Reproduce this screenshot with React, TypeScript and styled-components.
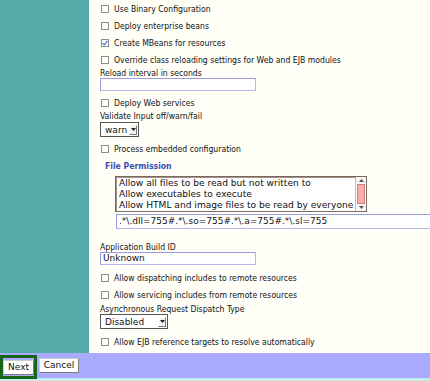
import React from "react";
import styled, { createGlobalStyle } from "styled-components";

const Global = createGlobalStyle`
  html, body { margin: 0; padding: 0; background: #fffff8; }
  body { font-family: "DejaVu Sans Condensed", "DejaVu Sans", sans-serif; }
`;

const Page = styled.div`
  width: 430px;
  height: 381px;
  overflow: hidden;
  display: flex;
  flex-direction: column;
`;

const Main = styled.div`
  display: grid;
  grid-template-columns: 89px 1fr;
  height: 353px;
`;

const Sidebar = styled.div`
  background: #54aaa6;
`;

const Content = styled.div`
  background: #fffff8;
  padding-left: 11px;
  overflow: hidden;
  display: flex;
  flex-direction: column;
  font-family: "DejaVu Sans Condensed", "DejaVu Sans", sans-serif;
  font-size: 8.6px;
  color: #111;
`;

const CheckRow = styled.label<{ $mt?: number }>`
  display: flex;
  align-items: center;
  gap: 5px;
  height: 17px;
  margin-top: ${(p) => p.$mt ?? 0}px;
  padding-left: 1px;
  white-space: nowrap;
`;

const Box = styled.span`
  width: 8px;
  height: 8px;
  box-sizing: border-box;
  border: 1px solid #8e8e8e;
  background: #ffffff;
  display: inline-flex;
  align-items: center;
  justify-content: center;
  flex: none;
`;

const Label = styled.div<{ $mt?: number }>`
  line-height: 10px;
  height: 10px;
  margin-top: ${(p) => p.$mt ?? 0}px;
  white-space: nowrap;
`;

const TextInput = styled.div<{ $w: number; $ml?: number; $mt?: number; $h?: number }>`
  width: ${(p) => p.$w}px;
  height: ${(p) => p.$h ?? 13}px;
  margin-left: ${(p) => p.$ml ?? 0}px;
  margin-top: ${(p) => p.$mt ?? 0}px;
  box-sizing: border-box;
  border: 1px solid #b4b4ee;
  border-top-color: #9a9ae0;
  border-left-color: #9a9ae0;
  background: #ffffff;
  font-family: "DejaVu Sans", sans-serif;
  font-size: 9px;
  line-height: ${(p) => (p.$h ?? 13) - 2}px;
  padding-left: 2px;
  white-space: nowrap;
  flex: none;
  color: #111;
`;

const Select = styled.div<{ $w: number; $mt?: number }>`
  width: ${(p) => p.$w}px;
  height: 15px;
  margin-top: ${(p) => p.$mt ?? 0}px;
  box-sizing: border-box;
  border: 1px solid #555;
  background: #fff;
  display: flex;
  align-items: center;
  justify-content: space-between;
  padding: 0 1px 0 4px;
  font-family: "DejaVu Sans", sans-serif;
  font-size: 9px;
  flex: none;
`;

const ArrowBtn = styled.span`
  width: 8px;
  height: 10px;
  box-sizing: border-box;
  border-right: 1px solid #777;
  border-bottom: 1px solid #777;
  border-top: 1px solid #fff;
  border-left: 1px solid #fff;
  background: #f2f2f2;
  display: flex;
  align-items: center;
  justify-content: center;
`;

const Heading = styled.div<{ $mt?: number }>`
  margin-top: ${(p) => p.$mt ?? 0}px;
  margin-left: 5px;
  height: 12px;
  line-height: 12px;
  font-weight: bold;
  color: #3a4fb0;
`;

const ListBox = styled.div`
  width: 252px;
  height: 36px;
  margin-left: 15px;
  margin-top: 4px;
  box-sizing: border-box;
  border: 1px solid #7a6a5e;
  box-shadow: inset 1px 1px 0 #a09088;
  background: #fff;
  display: flex;
  flex: none;
`;

const ListItems = styled.div`
  flex: 1;
  padding: 1px 0 0 3px;
  font-family: "DejaVu Sans", sans-serif;
  font-size: 9.1px;
  line-height: 11px;
  white-space: nowrap;
  overflow: hidden;
  color: #111;
`;

const ScrollBar = styled.div`
  width: 10px;
  display: flex;
  flex-direction: column;
  border-left: 1px solid #bbb;
  background: #fff;
`;

const ScrollArrow = styled.div`
  height: 7px;
  display: flex;
  align-items: center;
  justify-content: center;
  background: #f6f6f6;
`;

const Thumb = styled.div`
  flex: 1;
  background: #ffaaaa;
  border: 1px solid #d08080;
  margin: 0 1px;
`;

const Footer = styled.div`
  height: 25px;
  background: #aaaaff;
  border-bottom: 3px solid #c6ecec;
  display: flex;
  align-items: flex-start;
  gap: 2px;
`;

const DefaultFrame = styled.div`
  margin-top: 2px;
  width: 37px;
  height: 24px;
  box-sizing: border-box;
  border: 3px solid #15661a;
  display: flex;
  align-items: center;
  justify-content: center;
`;

const Button = styled.button<{ $w: number; $mt?: number }>`
  width: ${(p) => p.$w}px;
  height: 15px;
  margin-top: ${(p) => p.$mt ?? 0}px;
  padding: 0;
  box-sizing: border-box;
  border: 1px solid #7a7a7a;
  border-top-color: #cfcfcf;
  border-left-color: #cfcfcf;
  background: #ffffff;
  font-family: "DejaVu Sans", sans-serif;
  font-size: 9px;
  line-height: 13px;
  color: #111;
`;

const Check = ({ checked, children, mt }: { checked?: boolean; children: React.ReactNode; mt?: number }) => (
  <CheckRow $mt={mt}>
    <Box>
      {checked && (
        <svg width="6" height="6" viewBox="0 0 6 6">
          <path d="M0.6 3.2 L2.3 4.9 L5.4 0.8" fill="none" stroke="#3b74d8" strokeWidth="1.2" />
        </svg>
      )}
    </Box>
    <span>{children}</span>
  </CheckRow>
);

const DownTri = () => (
  <svg width="5" height="3" viewBox="0 0 5 3">
    <path d="M0 0 L5 0 L2.5 3 Z" fill="#222" />
  </svg>
);

export default function App() {
  return (
    <Page>
      <Global />
      <Main>
        <Sidebar />
        <Content>
          <Check>Use Binary Configuration</Check>
          <Check>Deploy enterprise beans</Check>
          <Check checked>Create MBeans for resources</Check>
          <Check>Override class reloading settings for Web and EJB modules</Check>
          <Label>Reload interval in seconds</Label>
          <TextInput $w={156} />
          <Check mt={3}>Deploy Web services</Check>
          <Label>Validate Input off/warn/fail</Label>
          <Select $w={39} $mt={1}>
            <span>warn</span>
            <ArrowBtn>
              <DownTri />
            </ArrowBtn>
          </Select>
          <Check mt={3}>Process embedded configuration</Check>
          <Heading $mt={3}>File Permission</Heading>
          <ListBox>
            <ListItems>
              <div>Allow all files to be read but not written to</div>
              <div>Allow executables to execute</div>
              <div>Allow HTML and image files to be read by everyone</div>
            </ListItems>
            <ScrollBar>
              <ScrollArrow>
                <svg width="5" height="3" viewBox="0 0 5 3">
                  <path d="M0 3 L5 3 L2.5 0 Z" fill="#555" />
                </svg>
              </ScrollArrow>
              <Thumb />
              <ScrollArrow>
                <svg width="5" height="3" viewBox="0 0 5 3">
                  <path d="M0 0 L5 0 L2.5 3 Z" fill="#555" />
                </svg>
              </ScrollArrow>
            </ScrollBar>
          </ListBox>
          <TextInput $w={330} $ml={16} $mt={2} $h={15}>
            .*\.dll=755#.*\.so=755#.*\.a=755#.*\.sl=755
          </TextInput>
          <Label $mt={13}>Application Build ID</Label>
          <TextInput $w={156}>Unknown</TextInput>
          <Check mt={4}>Allow dispatching includes to remote resources</Check>
          <Check>Allow servicing includes from remote resources</Check>
          <Label $mt={1}>Asynchronous Request Dispatch Type</Label>
          <Select $w={68}>
            <span>Disabled</span>
            <ArrowBtn>
              <DownTri />
            </ArrowBtn>
          </Select>
          <Check mt={4}>Allow EJB reference targets to resolve automatically</Check>
        </Content>
      </Main>
      <Footer>
        <DefaultFrame>
          <Button $w={31}>Next</Button>
        </DefaultFrame>
        <Button $w={40} $mt={5}>Cancel</Button>
      </Footer>
    </Page>
  );
}
